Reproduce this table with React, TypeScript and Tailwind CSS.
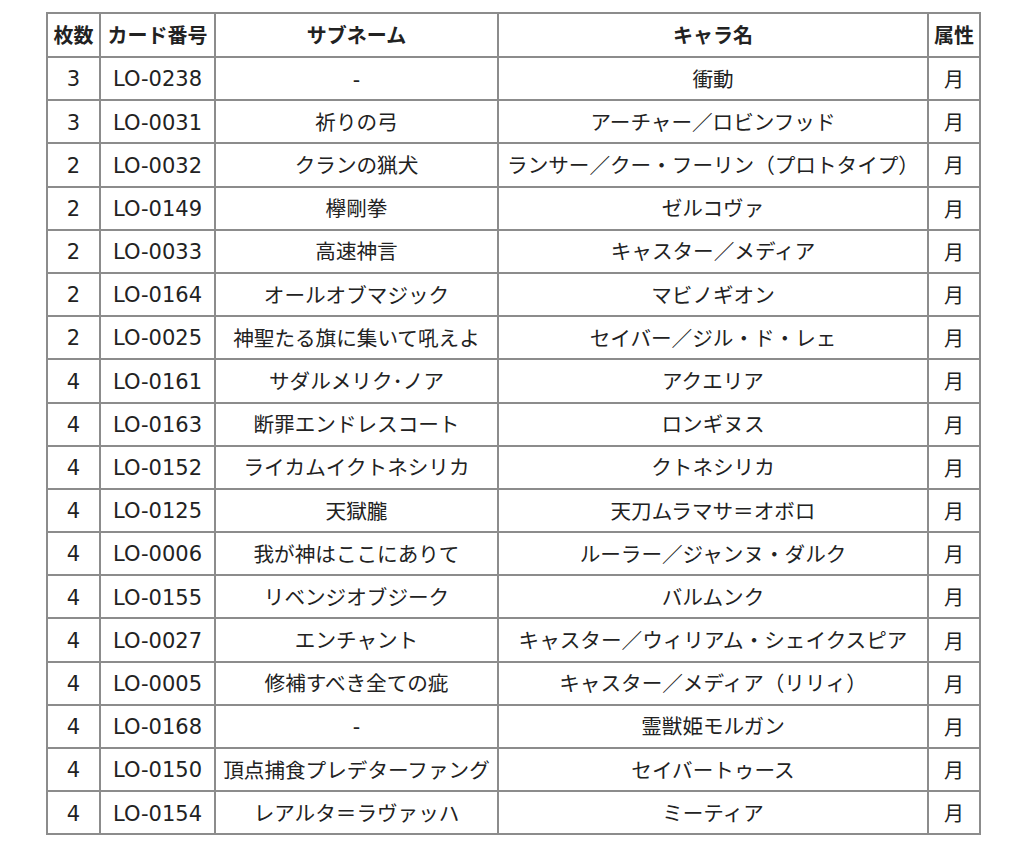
const rows: [string, string, string, string][] = [
  ["3", "LO-0238", "-", "衝動"],
  ["3", "LO-0031", "祈りの弓", "アーチャー／ロビンフッド"],
  ["2", "LO-0032", "クランの猟犬", "ランサー／クー・フーリン（プロトタイプ）"],
  ["2", "LO-0149", "欅剛拳", "ゼルコヴァ"],
  ["2", "LO-0033", "高速神言", "キャスター／メディア"],
  ["2", "LO-0164", "オールオブマジック", "マビノギオン"],
  ["2", "LO-0025", "神聖たる旗に集いて吼えよ", "セイバー／ジル・ド・レェ"],
  ["4", "LO-0161", "サダルメリク･ノア", "アクエリア"],
  ["4", "LO-0163", "断罪エンドレスコート", "ロンギヌス"],
  ["4", "LO-0152", "ライカムイクトネシリカ", "クトネシリカ"],
  ["4", "LO-0125", "天獄朧", "天刀ムラマサ＝オボロ"],
  ["4", "LO-0006", "我が神はここにありて", "ルーラー／ジャンヌ・ダルク"],
  ["4", "LO-0155", "リベンジオブジーク", "バルムンク"],
  ["4", "LO-0027", "エンチャント", "キャスター／ウィリアム・シェイクスピア"],
  ["4", "LO-0005", "修補すべき全ての疵", "キャスター／メディア（リリィ）"],
  ["4", "LO-0168", "-", "霊獣姫モルガン"],
  ["4", "LO-0150", "頂点捕食プレデターファング", "セイバートゥース"],
  ["4", "LO-0154", "レアルタ＝ラヴァッハ", "ミーティア"],
]

const headers = ["枚数", "カード番号", "サブネーム", "キャラ名", "属性"]

const cell = "border-2 border-[#8c8c8c] p-0 text-center whitespace-nowrap"

export default function App() {
  return (
    <div className="min-h-[853px] bg-white pt-[12px] pl-[46px] font-['DejaVu_Sans','Noto_Sans_CJK_JP',sans-serif] text-[20px] text-[#222]">
      <table className="table-fixed border-collapse border-2 border-[#8c8c8c] w-[933px]">
        <colgroup>
          <col className="w-[53px]" />
          <col className="w-[115px]" />
          <col className="w-[283px]" />
          <col className="w-[430px]" />
          <col className="w-[52px]" />
        </colgroup>
        <thead>
          <tr className="h-[44px]">
            {headers.map((h) => (
              <th key={h} className={`${cell} font-bold pt-[2px]`}>
                {h}
              </th>
            ))}
          </tr>
        </thead>
        <tbody>
          {rows.map(([count, no, sub, name]) => (
            <tr key={no} className="h-[43.2px]">
              <td className={`${cell} text-[21px] pt-[3px]`}>{count}</td>
              <td className={`${cell} text-[21px] pt-[3px]`}>{no}</td>
              <td className={`${cell} text-[20.6px] pt-[3px]`}>{sub}</td>
              <td className={`${cell} text-[20.6px] pt-[3px]`}>{name}</td>
              <td className={`${cell} pt-[3px]`}>月</td>
            </tr>
          ))}
        </tbody>
      </table>
    </div>
  )
}
